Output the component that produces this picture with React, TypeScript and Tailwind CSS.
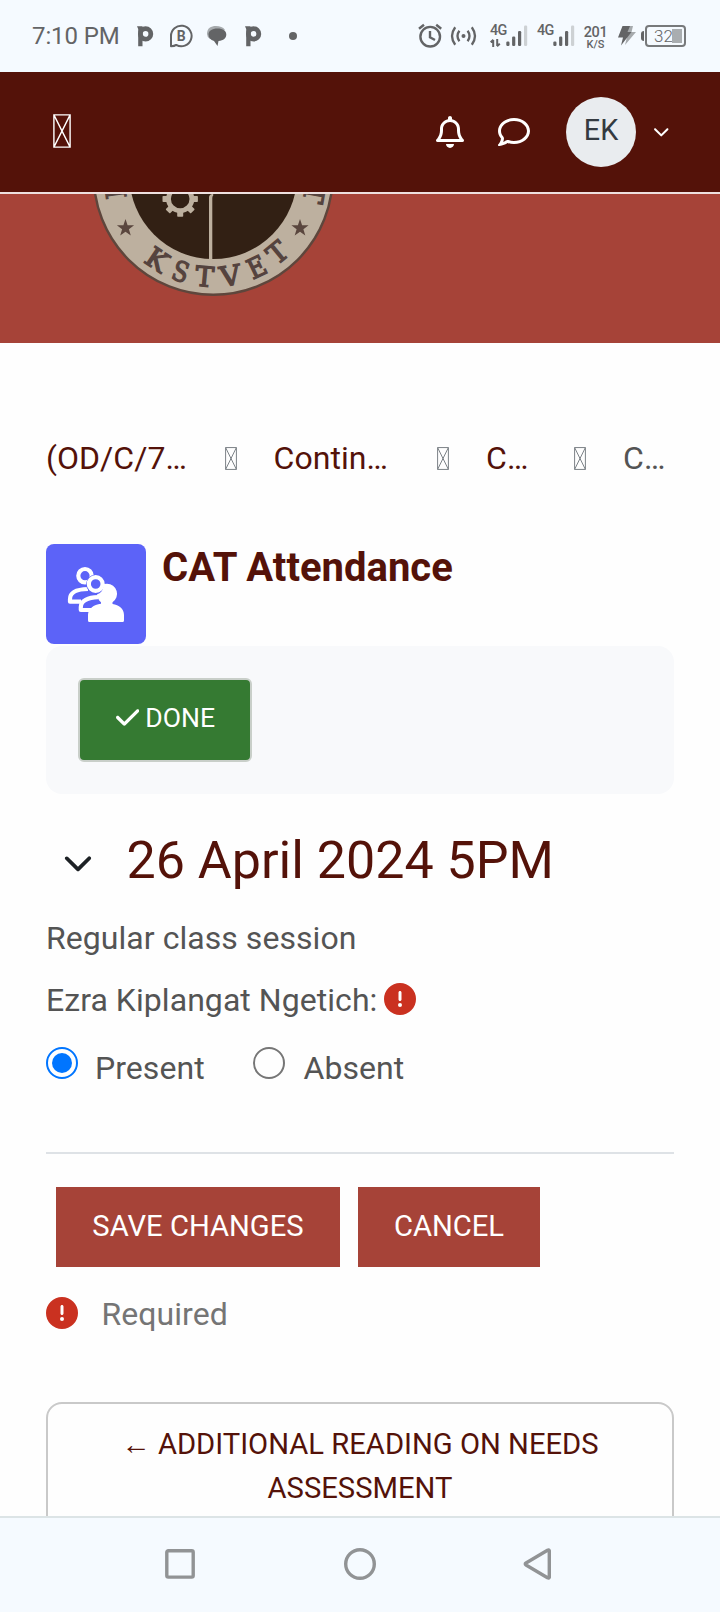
import type { ReactNode } from "react";
import {
  FaRegBell,
  FaRegComment,
  FaChevronDown,
  FaCheck,
  FaCircleExclamation,
} from "react-icons/fa6";

function MissingGlyph({ className, stroke }: { className: string; stroke: number }) {
  return (
    <svg className={className} viewBox="0 0 12 24" preserveAspectRatio="none" fill="none" stroke="currentColor">
      <path vectorEffect="non-scaling-stroke" strokeWidth={stroke} d="M.6.6H11.4V23.4H.6ZM.6.6 11.4 23.4M11.4.6.6 23.4" />
    </svg>
  );
}

function AppP({ className }: { className: string }) {
  return (
    <svg className={className} width="17" height="21" viewBox="0 0 17 21" fill="none">
      <circle cx="8.6" cy="7.9" r="5.2" stroke="#636466" strokeWidth="4.8" />
      <path d="M0 .3H5.5V20.2H1.2V3Z" fill="#636466" />
    </svg>
  );
}

function Signal({ arrows, className }: { arrows?: boolean; className: string }) {
  return (
    <div className={`flex h-[22px] w-[38px] ${className}`}>
      <div className="flex w-[16px] flex-col">
        <span className="text-[14.4px] leading-[12px] font-medium tracking-[-0.6px]">4G</span>
        {arrows && (
          <svg className="mt-[1.5px]" width="11" height="8" viewBox="0 0 11 8" fill="none" stroke="#636466" strokeWidth="2">
            <path d="M3.2 8V1M.6 3.2 3.4.8M7.2 0V7M9.8 4.8 7 7.2" />
          </svg>
        )}
      </div>
      <svg width="22" height="22" viewBox="0 0 22 22" fill="#636466">
        <rect x=".3" y="16.5" width="3.2" height="4.5" rx="1.2" />
        <rect x="6.1" y="11.5" width="3.2" height="9.5" rx="1.2" />
        <rect x="12" y="6" width="3.2" height="15" rx="1.2" />
        <rect x="18" y=".5" width="3.2" height="20.5" rx="1.2" fill="#cdd1d4" />
      </svg>
    </div>
  );
}

function StatusBar() {
  return (
    <div className="flex h-[72px] shrink-0 items-center bg-[#f5faff] pl-[32px] text-[#636466]">
      <span className="w-[105px] text-[24px] leading-[28px] tracking-[-0.1px]">7:10 PM</span>
      <AppP className="" />
      <svg className="ml-[15px]" width="24" height="24" viewBox="0 0 24 24" fill="none">
        <path d="M2 22.2V12.2A10.3 10.3 0 1 1 7.2 20.9Q5.5 22.2 2 22.2Z" stroke="#636466" strokeWidth="2" strokeLinejoin="round" />
        <text x="12.2" y="17" textAnchor="middle" fontFamily="Roboto" fontWeight="700" fontSize="14" fill="#636466">B</text>
      </svg>
      <svg className="ml-[13px]" width="22" height="22" viewBox="0 0 22 22">
        <path d="M1 9C1 3 5 1 10 1C14 1 17 2 19 5L4 14Q1 12 1 9Z" fill="#a6aaad" />
        <path d="M11.5 3.5C17 3.5 20.3 6 20.3 9.5C20.3 13 17.5 15.7 12.5 16L11.5 21 8 16C4.5 15 2.5 12.5 2.5 9.5C2.5 6 6 3.5 11.5 3.5Z" fill="#636466" />
      </svg>
      <AppP className="ml-[17px]" />
      <i className="ml-[27px] size-[8px] rounded-full bg-[#636466]" />
      <svg className="ml-[120px]" width="26" height="26" viewBox="0 0 26 26" fill="none" stroke="#636466" strokeWidth="2.4">
        <circle cx="13.2" cy="13.7" r="9.8" />
        <path d="M13 8V14.2L18 17M2 5.8 7 1.8M24.2 5.8 19.2 1.8" />
      </svg>
      <svg className="ml-[6px]" width="28" height="20" viewBox="0 0 28 20" fill="none" stroke="#636466" strokeWidth="2.3">
        <circle cx="14.5" cy="10" r="2" fill="#636466" stroke="none" />
        <path d="M10.4 4.8Q6.6 10 10.4 15.2M6.2 1.2Q-.2 10 6.2 18.8M18.6 4.8Q22.4 10 18.6 15.2M22.8 1.2Q29.2 10 22.8 18.8" />
      </svg>
      <Signal arrows className="ml-[13px]" />
      <Signal className="ml-[9px]" />
      <div className="ml-[9px] flex w-[23px] flex-col items-center pt-[2px] font-medium">
        <span className="text-[14.5px] leading-[14px] tracking-[-0.4px]">201</span>
        <span className="text-[11px] leading-[9px]">K/S</span>
      </div>
      <svg className="ml-[11px]" width="19" height="20" viewBox="0 0 19 20">
        <path d="M9 0H15L13.5 6H18L7 19 9 11H5Z" fill="#a6aaad" />
        <path d="M4.5 0H12L9.5 6H13.5L3 19.5 5 11.5H0Z" fill="#636466" />
      </svg>
      <i className="ml-[4px] h-[10px] w-[3px] rounded-l-sm bg-[#636466]" />
      <div className="ml-px flex h-[22px] w-[41px] items-center rounded-[4px] border-2 border-[#77797b] pl-[7px]">
        <span className="w-[18px] text-[17px] leading-[18px] font-light">32</span>
        <i className="h-[14px] w-[10px] bg-[#a9adb0]" />
      </div>
    </div>
  );
}

function Header() {
  return (
    <header className="flex h-[122px] shrink-0 items-center border-b-2 border-[#eee0df] bg-[#541209] pr-[51px] pl-[53px] text-white">
      <MissingGlyph className="-mt-[2px] h-[34px] w-[18px]" stroke={1.4} />
      <FaRegBell className="ml-auto h-[32px] w-[28px]" />
      <FaRegComment className="ml-[34px] size-[32px]" />
      <div className="ml-[36px] flex size-[70px] items-center justify-center rounded-full bg-[#e9ecef] pb-[4px] text-[28.8px] leading-[32px] text-[#343a40]">
        EK
      </div>
      <FaChevronDown className="-mt-[2px] ml-[16.5px] size-[16.5px]" />
    </header>
  );
}

const sealLetters: [string, number, number, number, number][] = [
  ["K", -56, 84, 33.8, 21.5],
  ["S", -32.5, 96, 18.9, 16],
  ["T", -8.5, 101, 5.1, 18.5],
  ["V", 17, 100, -9.6, 21],
  ["E", 43.5, 91.5, -25.4, 18],
  ["T", 64, 77, -39.4, 18.5],
  ["K", -98, 13, -98, 21.5],
  ["T", 101, 18.5, 100, 18.5],
];

function Banner() {
  return (
    <div className="h-[149px] shrink-0 overflow-hidden bg-[#a64338]">
      <svg width="720" height="149" viewBox="0 194 720 149">
        <g transform="translate(213.2 175.3)">
          <circle r="119.5" fill="#bdb09f" stroke="#5e463c" strokeWidth="2.4" />
          <circle r="83.8" fill="#322014" />
          <path d="M-4.2 90V22Q-4.2 19 0 18.5V20.5Q-.9 20.5-.9 23V90Z" fill="#bdb09f" />
          <g transform="translate(-33 23.7)">
            <circle r="11.7" fill="none" stroke="#bdb09f" strokeWidth="4.8" />
            {[0, 45, 90, 135, 180, 225, 270, 315].map((a) => (
              <rect key={a} x="-3" y="12.5" width="6" height="5.2" rx=".8" fill="#bdb09f" transform={`rotate(${a})`} />
            ))}
          </g>
          {[-87.7, 86.8].map((x) => (
            <path
              key={x}
              transform={`translate(${x} 52.8)`}
              fill="#5a463e"
              d="M0-9 2.1-2.8 8.6-2.8 3.4 1.1 5.3 7.3 0 3.6-5.3 7.3-3.4 1.1-8.6-2.8-2.1-2.8Z"
            />
          ))}
          {sealLetters.map(([l, x, y, a, w], i) => (
            <text
              key={i}
              transform={`translate(${x} ${y}) rotate(${a})`}
              y="10"
              textAnchor="middle"
              fontFamily="'DejaVu Serif'"
              fontSize="27.5"
              fill="#55433e"
              stroke="#55433e"
              strokeWidth="1.3"
              textLength={w}
              lengthAdjust="spacingAndGlyphs"
            >
              {l}
            </text>
          ))}
        </g>
      </svg>
    </div>
  );
}

function AttendanceIcon() {
  return (
    <svg className="size-[100px] shrink-0 rounded-[8px] bg-[#5c63f8]" viewBox="0 0 100 100" fill="none" stroke="#fff" strokeWidth="4.2">
      <circle cx="39" cy="31.7" r="6.7" />
      <path d="M35 57.7H24V55C24 48.5 31 45.2 42 45" strokeLinejoin="round" />
      <circle cx="49.7" cy="40" r="9.6" stroke="none" fill="#5c63f8" />
      <circle cx="49.7" cy="40" r="6.9" />
      <path d="M46 66H34.8V63C34.8 57 42 53.3 52 53.2" strokeLinejoin="round" />
      <path d="M56 40.8Q57 39.8 61 39.8A10 10 0 0 1 66.5 58.2V60C73 60.8 78 65 78 71V76.5Q78 78 76.5 78H43.5Q42 78 42 76.5V71C42 65 47.5 60.5 55 59.7V58.2Q51.5 55.5 51 50.5Q57.5 48.5 57.5 40.8Z" fill="#fff" stroke="none" />
    </svg>
  );
}

function Crumb({ children, className }: { children: ReactNode; className: string }) {
  return <span className={`whitespace-nowrap ${className}`}>{children}</span>;
}

function Radio({ checked }: { checked?: boolean }) {
  return checked ? (
    <span className="mt-[2px] flex size-[32px] items-center justify-center rounded-full border-2 border-[#0075ff]">
      <i className="size-[20px] rounded-full bg-[#0075ff]" />
    </span>
  ) : (
    <span className="mt-[2px] block size-[32px] rounded-full border-2 border-[#767676]" />
  );
}

export default function App() {
  return (
    <div className="flex h-[1612px] w-[720px] flex-col overflow-hidden bg-[#fefefe] font-['Roboto',sans-serif]">
      <StatusBar />
      <Header />
      <Banner />

      <main className="min-h-0 flex-1 overflow-hidden px-[46px] pt-[92px] text-[32px] leading-[46px] tracking-[0.05px] text-[#545454]">
        <nav className="flex h-[46px] items-center text-[#541209]">
          <Crumb className="w-[179px]">(OD/C/7…</Crumb>
          <MissingGlyph className="h-[23px] w-[12px] text-[#7c8287]" stroke={1} />
          <Crumb className="ml-[36.5px] w-[163.5px]">Contin…</Crumb>
          <MissingGlyph className="h-[23px] w-[12px] text-[#7c8287]" stroke={1} />
          <Crumb className="ml-[37px] w-[88px]">C…</Crumb>
          <MissingGlyph className="h-[23px] w-[12px] text-[#7c8287]" stroke={1} />
          <Crumb className="ml-[37px] text-[#545454]">C…</Crumb>
        </nav>

        <div className="mt-[63px] flex gap-[16px]">
          <AttendanceIcon />
          <h1 className="text-[40px] leading-[48px] font-bold tracking-normal text-[#541209]">CAT Attendance</h1>
        </div>

        <section className="mt-[2px] h-[148px] rounded-[16px] bg-[#f8f9fb] p-[32px]">
          <button className="flex h-[84px] w-[174px] items-start rounded-[6px] border-2 border-[#c9cfc9] bg-[#357a32] pt-[18px] pl-[36px] text-[26.6px] leading-[40px] tracking-normal text-white">
            <FaCheck className="mt-[6px] h-[27px] w-[23.3px]" />
            <span className="ml-[6px]">DONE</span>
          </button>
        </section>

        <div className="mt-[36px] flex h-[62px] text-[#541209]">
          <FaChevronDown className="mt-[17px] ml-[17px] size-[30px] text-[#1d2125]" />
          <h2 className="ml-[33.5px] text-[52px] leading-[62px] tracking-normal">26 April 2024 5PM</h2>
        </div>

        <p className="mt-[23px]">Regular class session</p>

        <div className="mt-[16px] flex">
          <p className="w-[338px] whitespace-nowrap">Ezra Kiplangat Ngetich:</p>
          <FaCircleExclamation className="mt-[6px] size-[32px] text-[#ca3120]" />
        </div>

        <div className="mt-[22px] flex h-[46px]">
          <label className="flex w-[207px] gap-[17px]">
            <Radio checked />
            Present
          </label>
          <label className="flex gap-[18.5px]">
            <Radio />
            Absent
          </label>
        </div>

        <hr className="mt-[61px] border-t-2 border-[#dee2e6]" />

        <div className="mt-[33px] ml-[10px] flex gap-[18px] text-[29.2px] leading-[42px] tracking-normal text-white">
          <button className="h-[80px] w-[284px] bg-[#a64338] pb-[2px] whitespace-nowrap">SAVE CHANGES</button>
          <button className="h-[80px] w-[182px] bg-[#a64338] pb-[2px] whitespace-nowrap">CANCEL</button>
        </div>

        <div className="mt-[24px] flex text-[#757575]">
          <FaCircleExclamation className="mt-[6px] size-[32px] text-[#ca3120]" />
          <span className="ml-[23.5px]">Required</span>
        </div>

        <div className="mt-[65px] h-[200px] rounded-[16px] border-2 border-[#c9c9c9] pt-[18px] text-center text-[29.2px] leading-[44px] tracking-normal text-[#541209]">
          ← ADDITIONAL READING ON NEEDS
          <br />
          ASSESSMENT
        </div>
      </main>

      <footer className="flex h-[96px] shrink-0 items-start justify-center border-t-2 border-[#dce4e6] bg-[#f5faff] pt-[30px]">
        <svg width="392" height="32" viewBox="164 0 392 32" fill="none" stroke="#919395" strokeWidth="3.4" strokeLinejoin="round">
          <rect x="166.8" y="2.7" width="26.4" height="26.4" rx="1.5" />
          <circle cx="360" cy="16" r="14.3" />
          <path d="M549.3 2.6V29.4Q549 30.5 547.5 29.8L526 17Q524.5 16 526 15L547.5 2.2Q549 1.5 549.3 2.6Z" />
        </svg>
      </footer>
    </div>
  );
}
